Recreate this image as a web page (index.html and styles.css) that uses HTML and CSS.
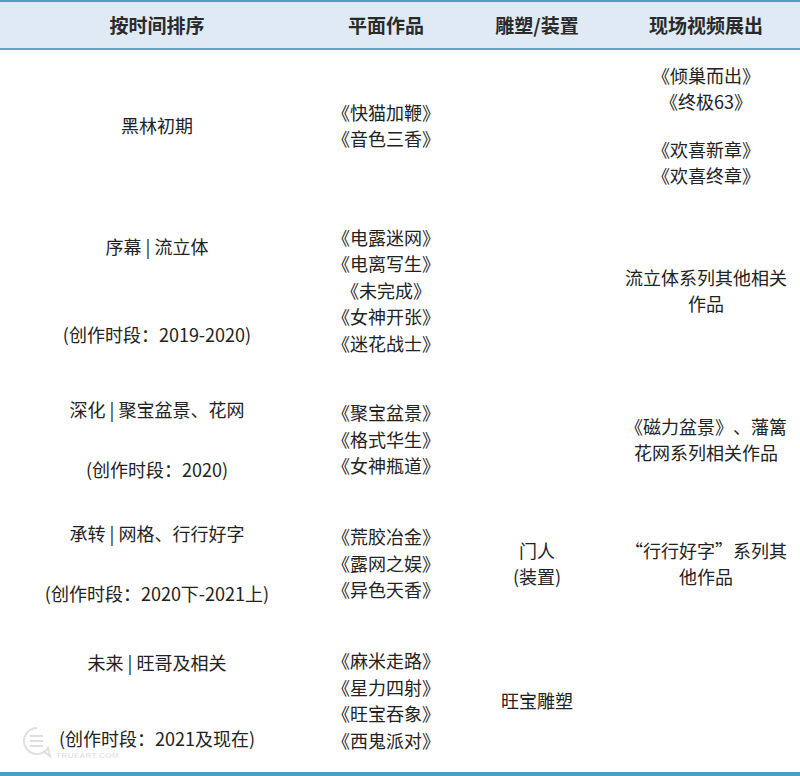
FILE: index.html
```html
<!DOCTYPE html>
<html lang="zh-CN">
<head>
<meta charset="utf-8">
<title>作品时间表</title>
<link rel="stylesheet" href="styles.css">
</head>
<body>
<div class="sheet">
  <div class="table">
    <div class="cell head">按时间排序</div>
    <div class="cell head">平面作品</div>
    <div class="cell head">雕塑/装置</div>
    <div class="cell head last">现场视频展出</div>

    <div class="cell"><p>黑林初期</p></div>
    <div class="cell"><p>《快猫加鞭》<br>《音色三香》</p></div>
    <div class="cell"></div>
    <div class="cell last stack-sm"><p>《倾巢而出》<br>《终极63》</p><p>《欢喜新章》<br>《欢喜终章》</p></div>

    <div class="cell gap-xl"><p>序幕 | 流立体</p><p>(创作时段：2019-2020)</p></div>
    <div class="cell"><p>《电露迷网》<br>《电离写生》<br>《未完成》<br>《女神开张》<br>《迷花战士》</p></div>
    <div class="cell"></div>
    <div class="cell last"><p>流立体系列其他相关<br>作品</p></div>

    <div class="cell gap-md"><p>深化 | 聚宝盆景、花网</p><p>(创作时段：2020)</p></div>
    <div class="cell"><p>《聚宝盆景》<br>《格式华生》<br>《女神瓶道》</p></div>
    <div class="cell"></div>
    <div class="cell last"><p>《磁力盆景》、藩篱<br>花网系列相关作品</p></div>

    <div class="cell gap-md"><p>承转 | 网格、行行好字</p><p>(创作时段：2020下-2021上)</p></div>
    <div class="cell"><p>《荒胶冶金》<br>《露网之娱》<br>《异色天香》</p></div>
    <div class="cell"><p>门人<br>(装置)</p></div>
    <div class="cell last"><p>“行行好字”系列其<br>他作品</p></div>

    <div class="cell gap-lg"><p>未来 | 旺哥及相关</p><p>(创作时段：2021及现在)</p></div>
    <div class="cell"><p>《麻米走路》<br>《星力四射》<br>《旺宝吞象》<br>《西鬼派对》</p></div>
    <div class="cell"><p>旺宝雕塑</p></div>
    <div class="cell last"></div>
  </div>
  <div class="watermark">
    <svg class="wm-icon" width="30" height="34" viewBox="0 0 30 34">
      <path d="M15 2 A13 13 0 1 0 26 22 L28 30 L21 25" fill="none" stroke="#999" stroke-width="2"/>
      <path d="M8 10 H21 M8 15 H21 M8 20 H21" stroke="#999" stroke-width="2"/>
    </svg>
    <span class="wm-text">TRUEART.COM</span>
  </div>
</div>
</body>
</html>
```

FILE: styles.css
```css
html, body {
  margin: 0;
  padding: 0;
  background: #ffffff;
}

.sheet {
  position: relative;
  width: 800px;
  height: 776px;
  overflow: hidden;
}

.table {
  display: grid;
  grid-template-columns: 314px 144px 158px 1fr;
  grid-template-rows: 50px 150px 180px 118px 130px 144px;
  border-bottom: 4px solid #4f9ec2;
  font-family: "Noto Sans CJK SC", "Microsoft YaHei", sans-serif;
  font-size: 18px;
  line-height: 26.5px;
  color: #222222;
  text-spacing-trim: space-all;
}

.cell {
  display: flex;
  flex-direction: column;
  align-items: center;
  justify-content: center;
  text-align: center;
}

.cell p {
  margin: 0;
  white-space: nowrap;
}

.cell.last {
  padding-right: 4px;
}

.head {
  background: #dfeaf5;
  border-top: 2px solid #4f9ec2;
  border-bottom: 2px solid #5ea4c6;
  font-size: 19px;
  font-weight: bold;
  color: #2a2a2a;
  box-sizing: border-box;
}

.stack-sm { gap: 21px; }
.gap-md { gap: 34px; }
.gap-lg { gap: 50px; }
.gap-xl { gap: 62px; }

.watermark {
  position: absolute;
  left: 22px;
  top: 734px;
  display: flex;
  align-items: flex-end;
  gap: 4px;
  opacity: 0.3;
  pointer-events: none;
}

.wm-icon {
  margin-top: -8px;
}

.wm-text {
  font-family: "Liberation Sans", Arial, sans-serif;
  font-size: 8px;
  line-height: 8px;
  color: #888888;
  letter-spacing: 0.5px;
  margin-bottom: 0;
}
```
